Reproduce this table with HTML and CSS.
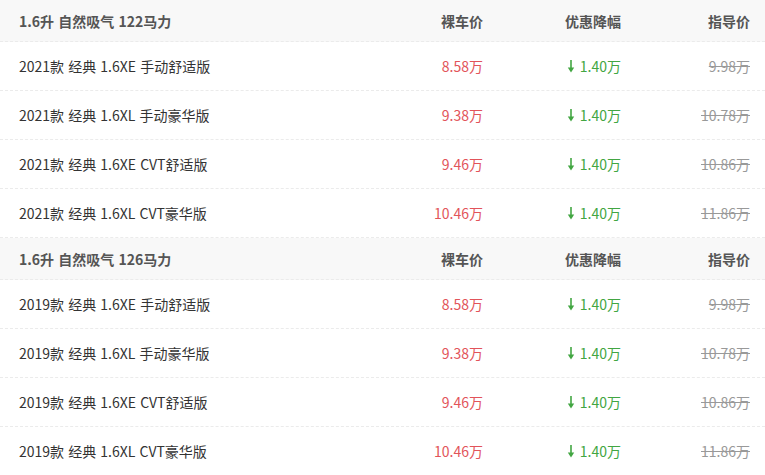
FILE: index.html
```html
<!DOCTYPE html>
<html lang="zh-CN">
<head>
<meta charset="utf-8">
<link rel="stylesheet" href="styles.css">
</head>
<body>
<div class="table">
  <div class="row head"><div class="name">1.6升 自然吸气 122马力</div><div class="c">裸车价</div><div class="c">优惠降幅</div><div class="c">指导价</div></div>
  <div class="row"><div class="name">2021款 经典 1.6XE 手动舒适版</div><div class="c price">8.58万</div><div class="c cut"><svg class="arr" viewBox="0 0 8 13" width="8" height="13"><path d="M4 0V9" stroke="currentColor" stroke-width="1.6"/><path d="M0.8 7.5H7.2L4 12.5Z" fill="currentColor"/></svg> 1.40万</div><div class="c guide">9.98万</div></div>
  <div class="row"><div class="name">2021款 经典 1.6XL 手动豪华版</div><div class="c price">9.38万</div><div class="c cut"><svg class="arr" viewBox="0 0 8 13" width="8" height="13"><path d="M4 0V9" stroke="currentColor" stroke-width="1.6"/><path d="M0.8 7.5H7.2L4 12.5Z" fill="currentColor"/></svg> 1.40万</div><div class="c guide">10.78万</div></div>
  <div class="row"><div class="name">2021款 经典 1.6XE CVT舒适版</div><div class="c price">9.46万</div><div class="c cut"><svg class="arr" viewBox="0 0 8 13" width="8" height="13"><path d="M4 0V9" stroke="currentColor" stroke-width="1.6"/><path d="M0.8 7.5H7.2L4 12.5Z" fill="currentColor"/></svg> 1.40万</div><div class="c guide">10.86万</div></div>
  <div class="row"><div class="name">2021款 经典 1.6XL CVT豪华版</div><div class="c price">10.46万</div><div class="c cut"><svg class="arr" viewBox="0 0 8 13" width="8" height="13"><path d="M4 0V9" stroke="currentColor" stroke-width="1.6"/><path d="M0.8 7.5H7.2L4 12.5Z" fill="currentColor"/></svg> 1.40万</div><div class="c guide">11.86万</div></div>
  <div class="row head"><div class="name">1.6升 自然吸气 126马力</div><div class="c">裸车价</div><div class="c">优惠降幅</div><div class="c">指导价</div></div>
  <div class="row"><div class="name">2019款 经典 1.6XE 手动舒适版</div><div class="c price">8.58万</div><div class="c cut"><svg class="arr" viewBox="0 0 8 13" width="8" height="13"><path d="M4 0V9" stroke="currentColor" stroke-width="1.6"/><path d="M0.8 7.5H7.2L4 12.5Z" fill="currentColor"/></svg> 1.40万</div><div class="c guide">9.98万</div></div>
  <div class="row"><div class="name">2019款 经典 1.6XL 手动豪华版</div><div class="c price">9.38万</div><div class="c cut"><svg class="arr" viewBox="0 0 8 13" width="8" height="13"><path d="M4 0V9" stroke="currentColor" stroke-width="1.6"/><path d="M0.8 7.5H7.2L4 12.5Z" fill="currentColor"/></svg> 1.40万</div><div class="c guide">10.78万</div></div>
  <div class="row"><div class="name">2019款 经典 1.6XE CVT舒适版</div><div class="c price">9.46万</div><div class="c cut"><svg class="arr" viewBox="0 0 8 13" width="8" height="13"><path d="M4 0V9" stroke="currentColor" stroke-width="1.6"/><path d="M0.8 7.5H7.2L4 12.5Z" fill="currentColor"/></svg> 1.40万</div><div class="c guide">10.86万</div></div>
  <div class="row"><div class="name">2019款 经典 1.6XL CVT豪华版</div><div class="c price">10.46万</div><div class="c cut"><svg class="arr" viewBox="0 0 8 13" width="8" height="13"><path d="M4 0V9" stroke="currentColor" stroke-width="1.6"/><path d="M0.8 7.5H7.2L4 12.5Z" fill="currentColor"/></svg> 1.40万</div><div class="c guide">11.86万</div></div>
</div>
</body>
</html>
```

FILE: styles.css
```css
html, body {
  margin: 0;
  padding: 0;
  background: #fff;
}
body {
  font-family: "Noto Sans CJK SC", "Noto Sans", sans-serif;
  font-size: 14px;
  color: #333;
}
.table {
  width: 765px;
}
.row {
  display: grid;
  grid-template-columns: 1fr 100px 138px 129px;
  align-items: center;
  height: 48px;
  padding: 0 15px 0 19px;
  border-bottom: 1px dashed #ebebeb;
}
.row.head {
  height: 41px;
  background: #f8f8f8;
  font-weight: bold;
  color: #555;
}
.c {
  text-align: right;
  white-space: nowrap;
}
.name {
  white-space: nowrap;
  word-spacing: 1px;
}
.price {
  color: #e2545a;
}
.cut {
  color: #42a642;
  display: flex;
  justify-content: flex-end;
  align-items: center;
  gap: 5px;
}
.arr {
  display: block;
  margin-top: 1px;
}
.guide {
  color: #999;
  text-decoration: line-through;
}
```
